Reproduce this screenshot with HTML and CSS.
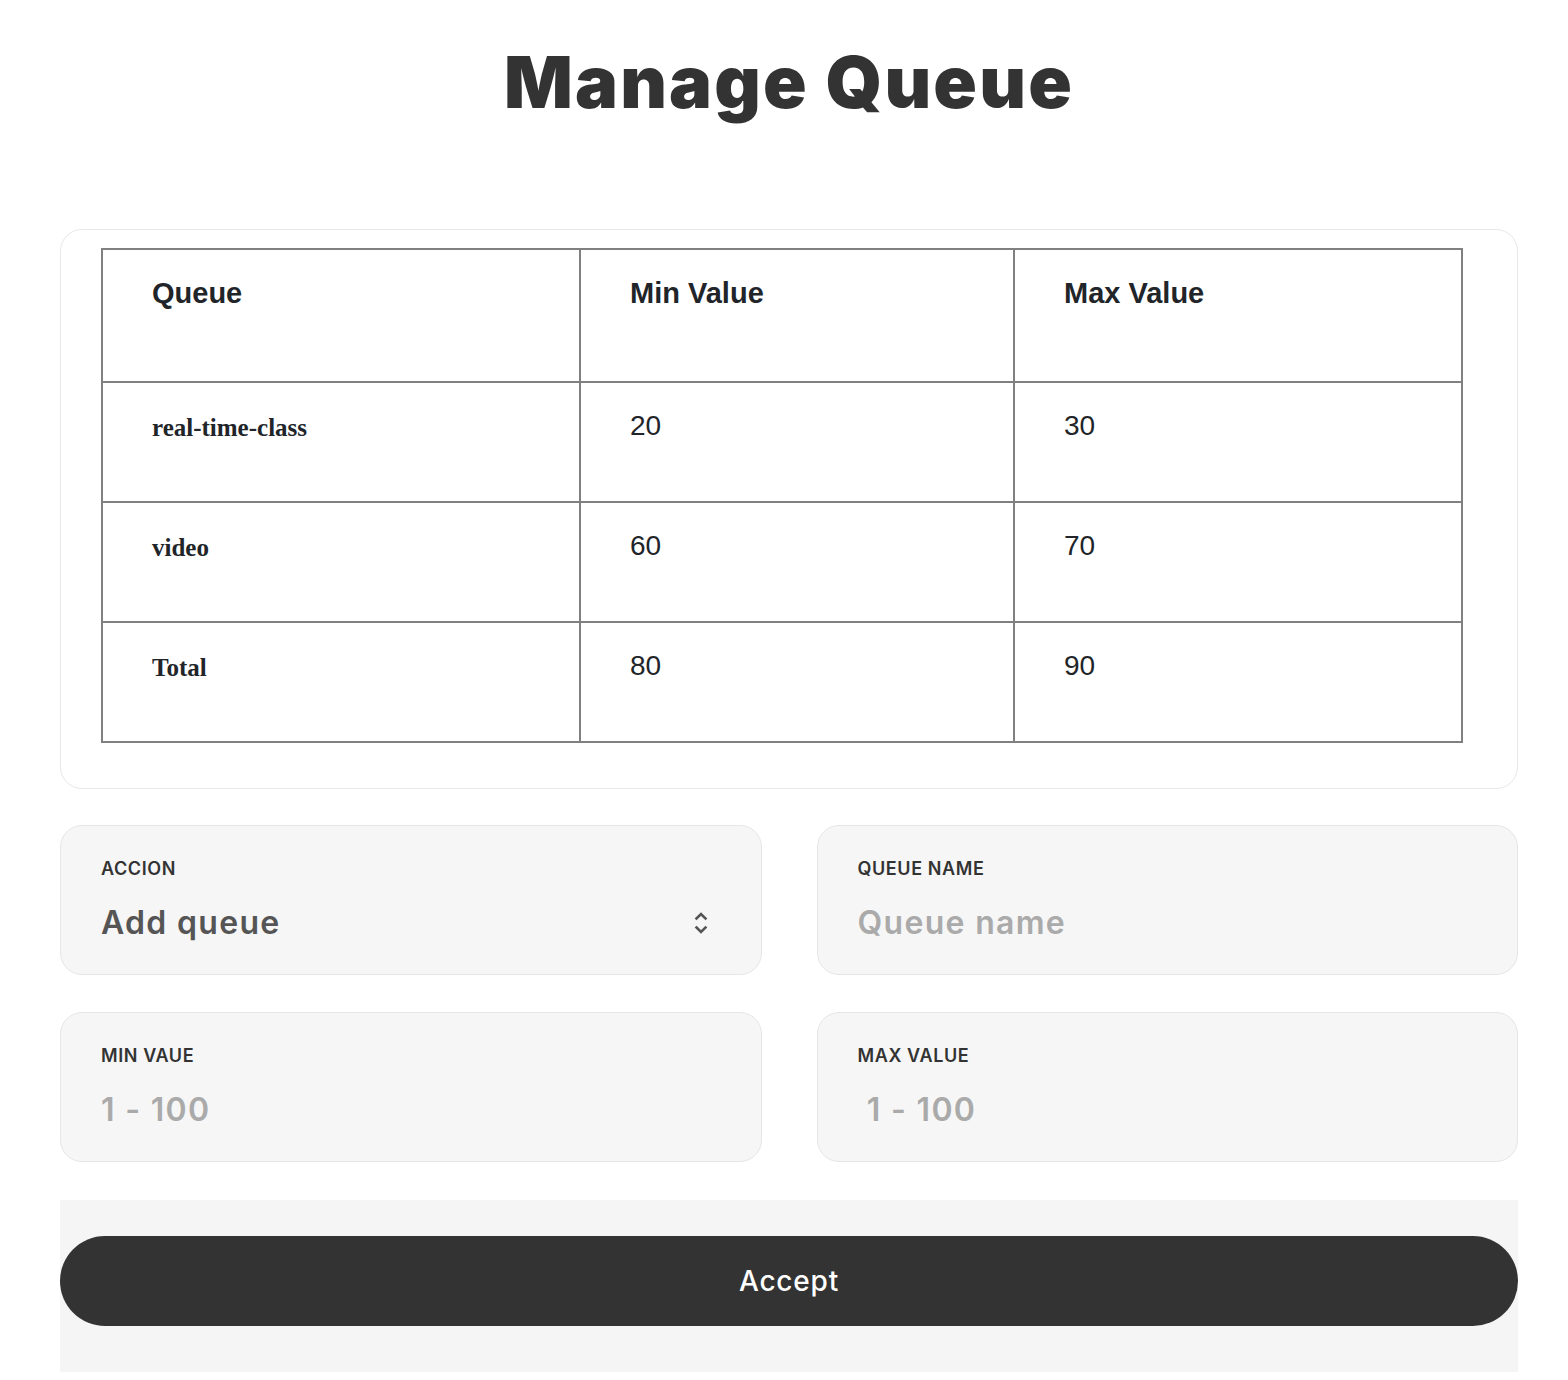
FILE: index.html
```html
<!DOCTYPE html>
<html lang="en">
<head>
<meta charset="utf-8">
<title>Manage Queue</title>
<link rel="stylesheet" href="styles.css">
</head>
<body>
<main class="page">
  <h1 class="title">Manage Queue</h1>

  <section class="table-card">
    <table class="queue-table">
      <thead>
        <tr class="head-row">
          <th class="col-queue">Queue</th>
          <th class="col-min">Min Value</th>
          <th class="col-max">Max Value</th>
        </tr>
      </thead>
      <tbody>
        <tr class="data-row">
          <th class="row-label">real-time-class</th>
          <td>20</td>
          <td>30</td>
        </tr>
        <tr class="data-row">
          <th class="row-label">video</th>
          <td>60</td>
          <td>70</td>
        </tr>
        <tr class="data-row">
          <th class="row-label">Total</th>
          <td>80</td>
          <td>90</td>
        </tr>
      </tbody>
    </table>
  </section>

  <form class="form">
    <div class="form-grid">
      <label class="field">
        <span class="field-label">ACCION</span>
        <span class="select-wrap">
          <select class="field-select">
            <option>Add queue</option>
            <option>Remove queue</option>
          </select>
          <svg class="select-icon" width="14" height="24" viewBox="0 0 14 24" aria-hidden="true">
            <path d="M2.5 7.5 L7 3 L11.5 7.5" fill="none" stroke="#555" stroke-width="2.6" stroke-linecap="square"/>
            <path d="M2.5 16.5 L7 21 L11.5 16.5" fill="none" stroke="#555" stroke-width="2.6" stroke-linecap="square"/>
          </svg>
        </span>
      </label>
      <label class="field">
        <span class="field-label">QUEUE NAME</span>
        <input class="field-input" type="text" placeholder="Queue name">
      </label>
      <label class="field">
        <span class="field-label">MIN VAUE</span>
        <input class="field-input" type="text" placeholder="1 - 100">
      </label>
      <label class="field">
        <span class="field-label">MAX VALUE</span>
        <input class="field-input" type="text" placeholder="&#160;1 - 100">
      </label>
    </div>
    <div class="actions">
      <button type="button" class="accept-btn">Accept</button>
    </div>
  </form>
</main>
</body>
</html>
```

FILE: styles.css
```css
* { box-sizing: border-box; }

html, body {
  margin: 0;
  padding: 0;
  background: #ffffff;
}

body {
  font-family: Inter, "Noto Sans", sans-serif;
  color: #333333;
}

.page {
  padding: 0 50px 8px 60px;
}

.title {
  margin: 46px 0 0;
  text-align: center;
  font-family: Inter, "Noto Sans", sans-serif;
  font-weight: 900;
  font-size: 72px;
  line-height: 72px;
  letter-spacing: 2.2px;
  color: #333333;
}

.table-card {
  margin-top: 111px;
  border: 1px solid #e8e8e8;
  border-radius: 22px;
  padding: 18px 54px 45px 40px;
  background: #ffffff;
}

.queue-table {
  width: 100%;
  border-collapse: collapse;
  border: 2px solid #808080;
  table-layout: fixed;
}

.queue-table th,
.queue-table td {
  border: 2px solid #808080;
  vertical-align: top;
  text-align: left;
  padding: 27px 49px 0 49px;
  line-height: 32px;
}

.col-queue { width: 478px; }
.col-min { width: 434px; }

.head-row { height: 133px; }
.data-row { height: 120px; }

.head-row th {
  font-family: "Liberation Sans", Arial, sans-serif;
  font-weight: 700;
  font-size: 29px;
  color: #212529;
}

.data-row td {
  font-family: "Liberation Sans", Arial, sans-serif;
  font-weight: 400;
  font-size: 28px;
  color: #212529;
}

.data-row .row-label {
  font-family: "Liberation Serif", "Times New Roman", serif;
  font-weight: 700;
  font-size: 25px;
  color: #212529;
  padding-top: 29px;
}

.form {
  margin-top: 36px;
}

.form-grid {
  display: grid;
  grid-template-columns: 1fr 1fr;
  column-gap: 55px;
  row-gap: 37px;
}

.field {
  display: flex;
  flex-direction: column;
  height: 150px;
  padding: 31px 40px 0 40px;
  background: #f6f6f6;
  border: 1px solid #e6e6e6;
  border-radius: 22px;
}

.field-label {
  font-family: Inter, "Noto Sans", sans-serif;
  font-weight: 600;
  font-size: 18px;
  line-height: 24px;
  letter-spacing: 0.6px;
  color: #333333;
}

.select-wrap {
  position: relative;
  display: block;
  margin-top: 20px;
}

.field-select,
.field-input {
  display: block;
  width: 100%;
  margin: 0;
  padding: 0;
  border: 0;
  outline: 0;
  background: transparent;
  font-family: Inter, "Noto Sans", sans-serif;
  font-weight: 600;
  font-size: 32px;
  line-height: 44px;
  height: 44px;
  letter-spacing: 1.3px;
  color: #555555;
  -webkit-appearance: none;
  appearance: none;
}

.field-input {
  margin-top: 20px;
}

.field-input::placeholder {
  color: #aaaaaa;
  opacity: 1;
}

.select-icon {
  position: absolute;
  right: 13px;
  top: 10px;
  pointer-events: none;
}

.actions {
  margin-top: 38px;
  background: #f5f5f5;
  padding: 36px 0 46px;
}

.accept-btn {
  display: block;
  width: 100%;
  height: 90px;
  border: 0;
  border-radius: 45px;
  background: #333333;
  color: #ffffff;
  font-family: Inter, "Noto Sans", sans-serif;
  font-weight: 500;
  font-size: 28px;
  letter-spacing: 0.8px;
  cursor: pointer;
}
```
